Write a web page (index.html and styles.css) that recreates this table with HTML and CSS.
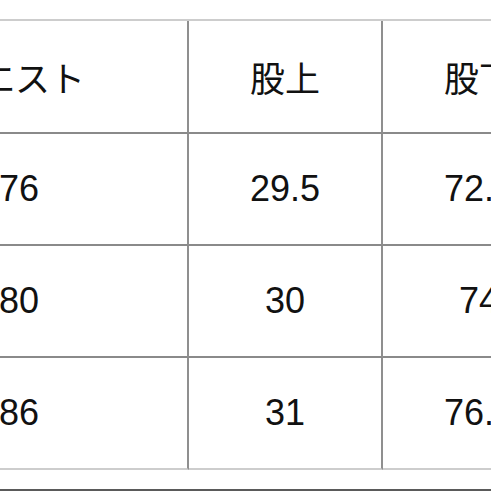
FILE: index.html
```html
<!DOCTYPE html>
<html lang="ja">
<head>
<meta charset="utf-8">
<title>サイズ表</title>
<link rel="stylesheet" href="styles.css">
</head>
<body>
<div class="sheet">
  <div class="table">
    <div class="cell head first">ウエスト</div>
    <div class="cell head">股上</div>
    <div class="cell head">股下</div>

    <div class="cell first">76</div>
    <div class="cell">29.5</div>
    <div class="cell">72.5</div>

    <div class="cell first">80</div>
    <div class="cell">30</div>
    <div class="cell">74</div>

    <div class="cell first last">86</div>
    <div class="cell last">31</div>
    <div class="cell last">76.5</div>
  </div>
  <div class="rule"></div>
</div>
</body>
</html>
```
FILE: styles.css
```css
html, body {
  margin: 0;
  padding: 0;
  overflow: hidden;
  background: #ffffff;
}

.sheet {
  width: 491px;
  height: 491px;
  overflow: hidden;
  display: flex;
  flex-direction: column;
}

.table {
  display: grid;
  grid-template-columns: 338px 194px 194px;
  margin-top: 19px;
  margin-left: -149px;
  border-top: 2px solid #cdcdcd;
  font-family: "Liberation Sans", "Noto Sans CJK JP", sans-serif;
  font-size: 36px;
  color: #111111;
}

.cell {
  height: 110px;
  display: flex;
  align-items: center;
  justify-content: center;
  border-right: 2px solid #8f8f8f;
  border-bottom: 2px solid #8a8a8a;
}

.head {
  height: 111px;
  font-family: "Noto Sans CJK JP", sans-serif;
  font-size: 35px;
}

.head.first {
  padding-right: 8px;
}

.cell.last {
  border-bottom-color: #cdcdcd;
}

.rule {
  margin-top: 19px;
  height: 2px;
  background: #5a5a5a;
}
```
